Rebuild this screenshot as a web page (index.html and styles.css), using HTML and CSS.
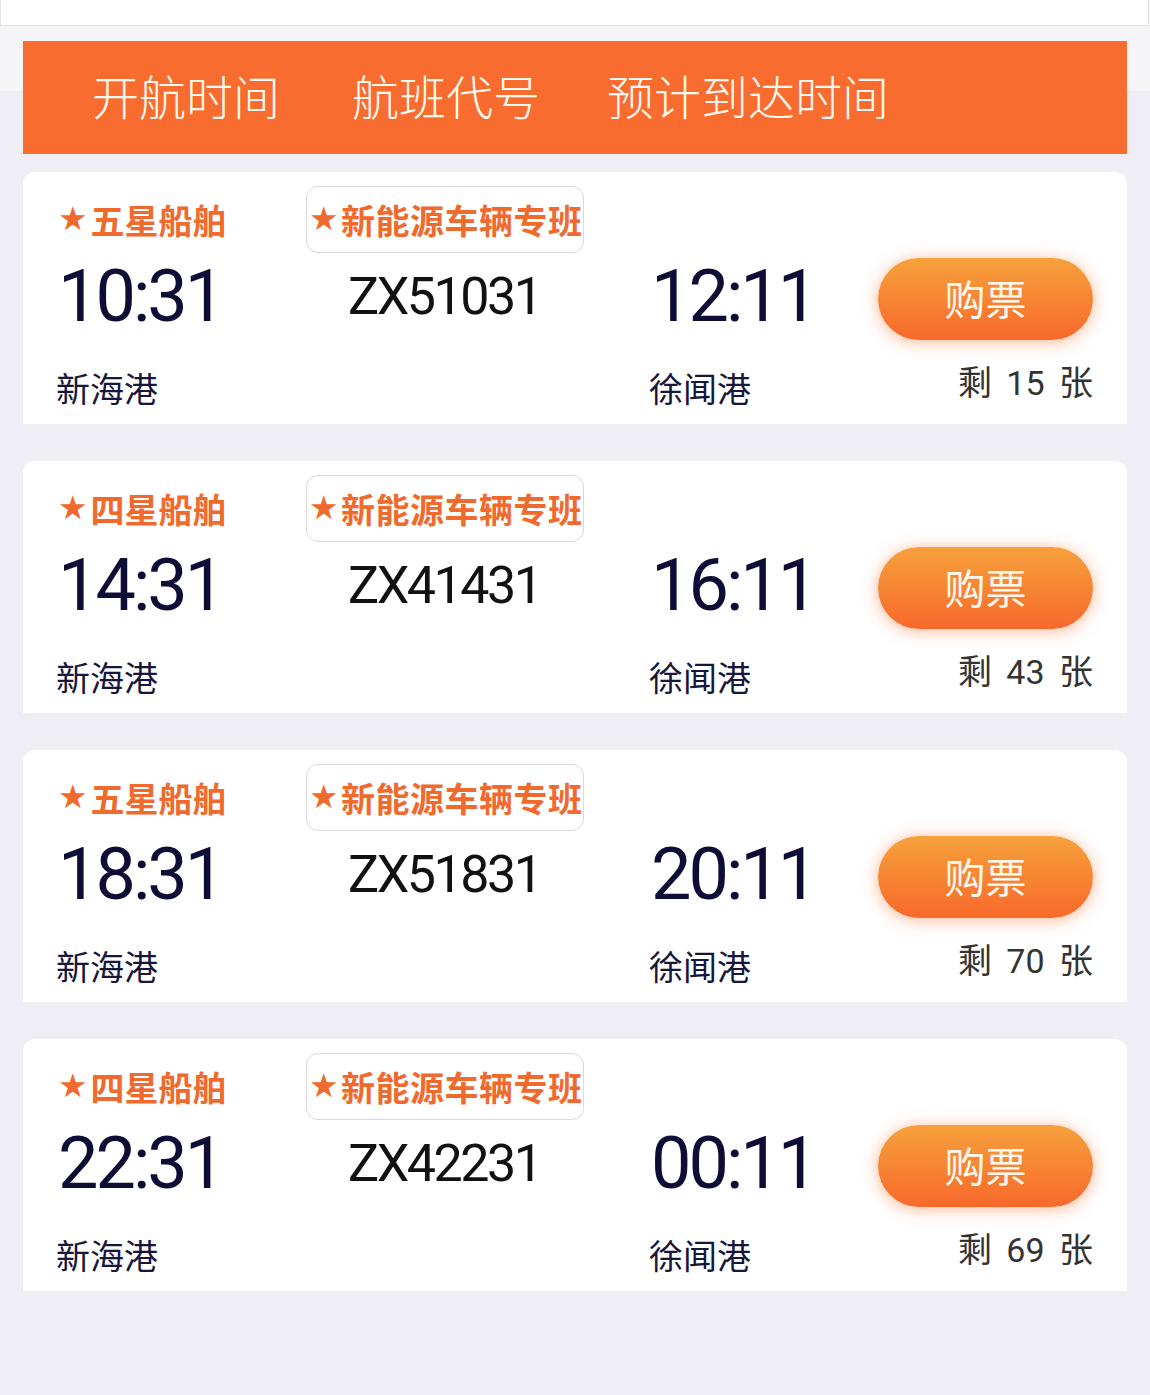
FILE: index.html
```html
<!DOCTYPE html>
<html lang="zh-CN">
<head>
<meta charset="utf-8">
<title>航班列表</title>
<link rel="stylesheet" href="styles.css">
</head>
<body>
<div class="topbar"></div>
<div class="header">
  <span class="hcol">开航时间</span>
  <span class="hcol">航班代号</span>
  <span class="hcol hcol-last">预计到达时间</span>
</div>
<div class="list">
  <div class="card">
    <div class="grade"><span class="star">★</span>五星船舶</div>
    <div class="tag"><span class="star">★</span>新能源车辆专班</div>
    <div></div><div></div>
    <div class="time">10:31</div>
    <div class="code">ZX51031</div>
    <div class="time">12:11</div>
    <div class="btn">购票</div>
    <div class="port">新海港</div>
    <div></div>
    <div class="port">徐闻港</div>
    <div class="left">剩 15 张</div>
  </div>
  <div class="card">
    <div class="grade"><span class="star">★</span>四星船舶</div>
    <div class="tag"><span class="star">★</span>新能源车辆专班</div>
    <div></div><div></div>
    <div class="time">14:31</div>
    <div class="code">ZX41431</div>
    <div class="time">16:11</div>
    <div class="btn">购票</div>
    <div class="port">新海港</div>
    <div></div>
    <div class="port">徐闻港</div>
    <div class="left">剩 43 张</div>
  </div>
  <div class="card">
    <div class="grade"><span class="star">★</span>五星船舶</div>
    <div class="tag"><span class="star">★</span>新能源车辆专班</div>
    <div></div><div></div>
    <div class="time">18:31</div>
    <div class="code">ZX51831</div>
    <div class="time">20:11</div>
    <div class="btn">购票</div>
    <div class="port">新海港</div>
    <div></div>
    <div class="port">徐闻港</div>
    <div class="left">剩 70 张</div>
  </div>
  <div class="card">
    <div class="grade"><span class="star">★</span>四星船舶</div>
    <div class="tag"><span class="star">★</span>新能源车辆专班</div>
    <div></div><div></div>
    <div class="time">22:31</div>
    <div class="code">ZX42231</div>
    <div class="time">00:11</div>
    <div class="btn">购票</div>
    <div class="port">新海港</div>
    <div></div>
    <div class="port">徐闻港</div>
    <div class="left">剩 69 张</div>
  </div>
</div>
</body>
</html>
```

FILE: styles.css
```css
* { box-sizing: border-box; }

html, body {
  margin: 0;
  padding: 0;
}

body {
  width: 1150px;
  min-height: 1395px;
  background: linear-gradient(#f5f5f7 0, #f5f5f7 91px, #efeef4 91px);
  font-family: Roboto, "Noto Sans CJK SC", sans-serif;
}

.topbar {
  height: 26px;
  margin-right: 1px;
  background: #fff;
  border: 1px solid #e3e3e6;
  border-top: none;
}

.header {
  margin: 15px 23px 0;
  height: 113px;
  background: #f96c30;
  display: flex;
  align-items: center;
  padding-left: 69px;
  padding-bottom: 7px;
  gap: 72px;
  font-family: "Noto Sans CJK SC", sans-serif;
  font-size: 47px;
  font-weight: 300;
  line-height: 1;
  color: #fff9ef;
}

.hcol-last {
  margin-left: -5px;
}

.list {
  margin: 18px 23px 0;
  display: flex;
  flex-direction: column;
  gap: 37px;
}

.card {
  height: 252px;
  background: #fff;
  border-radius: 12px 12px 0 0;
  padding: 14px 34px 0 35px;
  display: grid;
  grid-template-columns: 248px 345px 227px 215px;
  grid-template-rows: 67px 92px 1fr;
}

.grade {
  align-self: center;
  display: flex;
  align-items: center;
  font-family: "Noto Sans CJK SC", sans-serif;
  font-weight: 700;
  font-size: 34px;
  line-height: 1;
  color: #f0692d;
  padding-left: 0;
  white-space: nowrap;
}

.star {
  font-family: "DejaVu Sans", sans-serif;
  font-size: 33px;
  line-height: 1;
  margin-right: 3px;
  position: relative;
  top: -1px;
}

.tag {
  width: 278px;
  height: 67px;
  border: 1px solid #dadadd;
  border-radius: 12px;
  display: flex;
  align-items: center;
  padding-left: 2px;
  white-space: nowrap;
  font-family: "Noto Sans CJK SC", sans-serif;
  font-weight: 700;
  font-size: 34px;
  letter-spacing: 0.5px;
  line-height: 1;
  color: #f0692d;
  overflow: visible;
}

.tag .star {
  margin-right: 2px;
}

.time {
  align-self: center;
  font-family: Roboto, sans-serif;
  font-size: 72px;
  line-height: 1;
  letter-spacing: -3px;
  color: #0e0d36;
  margin-top: -4px;
}

.code {
  align-self: center;
  font-family: Roboto, sans-serif;
  font-size: 52px;
  line-height: 1;
  letter-spacing: -2.5px;
  color: #111;
  padding-left: 42px;
  margin-top: -4px;
}

.btn {
  align-self: center;
  height: 82px;
  border-radius: 41px;
  background: linear-gradient(#f6a13c, #f8692b);
  box-shadow: 0 2px 16px rgba(250, 110, 40, 0.5);
  display: flex;
  align-items: center;
  justify-content: center;
  font-family: "Noto Sans CJK SC", sans-serif;
  font-size: 41px;
  font-weight: 400;
  line-height: 1;
  color: #fff8ee;
  margin-top: 0;
  padding-bottom: 4px;
}

.port {
  align-self: start;
  margin-top: 26px;
  font-family: "Noto Sans CJK SC", sans-serif;
  font-size: 34px;
  line-height: 34px;
  color: #17163b;
  margin-left: -2px;
}

.left {
  align-self: start;
  justify-self: end;
  margin-top: 21px;
  font-family: Roboto, "Noto Sans CJK SC", sans-serif;
  font-size: 34px;
  line-height: 34px;
  color: #333;
  word-spacing: 6px;
}
```
